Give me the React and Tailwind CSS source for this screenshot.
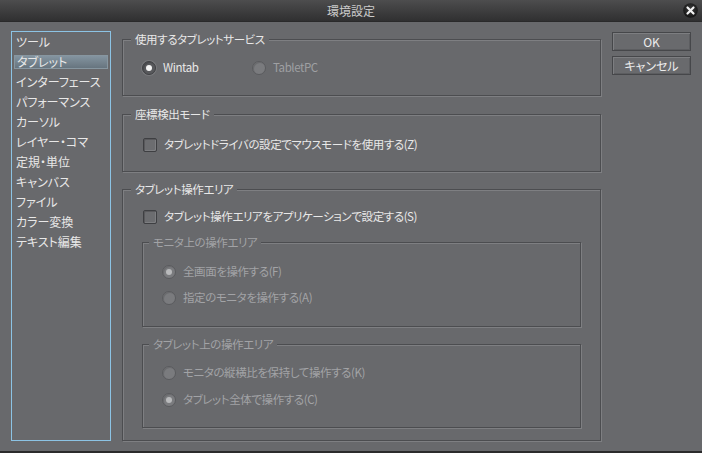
import React from "react";

const FONT = "font-['Noto_Sans_CJK_JP','Noto_Sans',sans-serif] [font-feature-settings:'palt']";

function Radio({ checked, disabled }) {
  return (
    <span
      className={
        "relative flex h-[14px] w-[14px] shrink-0 items-center justify-center rounded-full border " +
        (disabled
          ? "border-[#5a5b5e] bg-[#7a7b7e] shadow-[inset_1px_1px_0_#6a6b6e]"
          : "border-[#3f4043] bg-[#58595c] shadow-[inset_1px_1px_0_#48494c,0_0_0_1px_#77787b]")
      }
    >
      {checked && (
        <span
          className={
            "h-[6px] w-[6px] rounded-full " +
            (disabled ? "bg-[#b9babc]" : "bg-[#f4f4f4]")
          }
        />
      )}
    </span>
  );
}

function Checkbox() {
  return (
    <span className="h-[14px] w-[14px] shrink-0 rounded-[2px] border border-[#3e3f42] bg-[#6c6d70] shadow-[inset_1px_1px_0_#59595c,inset_-1px_-1px_0_#7d7e81]" />
  );
}

function Group({ title, className, legendClass, children }) {
  return (
    <fieldset
      className={
        "m-0 min-w-0 border border-[#4c4d50] p-0 shadow-[inset_1px_1px_0_#7e7f82,1px_1px_0_#7e7f82] " +
        className
      }
    >
      <legend
        className={
          "h-[16px] bg-[#68696c] px-[4px] leading-[16px] " +
          legendClass
        }
      >
        {title}
      </legend>
      {children}
    </fieldset>
  );
}

const items = [
  "ツール",
  "タブレット",
  "インターフェース",
  "パフォーマンス",
  "カーソル",
  "レイヤー・コマ",
  "定規・単位",
  "キャンバス",
  "ファイル",
  "カラー変換",
  "テキスト編集",
];

export default function App() {
  return (
    <div className={"flex h-[453px] w-[702px] flex-col overflow-hidden bg-[#68696c] text-[11.5px] tracking-[-0.4px] text-[#e8e8e8] " + FONT}>
      {/* title bar */}
      <div className="relative flex h-[22px] shrink-0 items-center justify-center border-b border-[#2a2a2b] bg-gradient-to-b from-[#4d4d4e] to-[#303031]">
        <span className="text-[12px] leading-[16px] tracking-normal text-[#cacaca]">環境設定</span>
        <div className="absolute right-[4px] top-[3px] h-[15px] w-[15px]">
          <svg width="15" height="15" viewBox="0 0 15 15">
            <defs>
              <radialGradient id="cg" cx="50%" cy="40%" r="60%">
                <stop offset="0%" stopColor="#3a3a3a" />
                <stop offset="100%" stopColor="#141414" />
              </radialGradient>
            </defs>
            <circle cx="7.5" cy="7.5" r="7.3" fill="url(#cg)" />
            <path d="M4.5 4.5 L10.5 10.5 M10.5 4.5 L4.5 10.5" stroke="#f2f2f2" strokeWidth="2.2" strokeLinecap="round" />
          </svg>
        </div>
      </div>

      {/* body */}
      <div className="flex flex-1 pl-[11px] pt-[9px]">
        {/* sidebar */}
        <div className="flex h-[410px] w-[100px] shrink-0 flex-col border border-[#8cc3e4] text-[12px] tracking-normal">
          {items.map((t, i) => (
            <div key={t} className="h-[20px] px-[2px] py-[3px]">
              <div
                className={
                  "flex h-[14px] items-center whitespace-nowrap pl-[2px] leading-[14px] " +
                  (i === 1
                    ? "border border-[#8796a0] bg-gradient-to-b from-[#8494a0] to-[#67757f] pl-[1px]"
                    : "")
                }
              >
                {t}
              </div>
            </div>
          ))}
        </div>

        {/* main column */}
        <div className="ml-[11px] flex w-[479px] shrink-0 flex-col">
          <Group title="使用するタブレットサービス" className="h-[65px]" legendClass="ml-[8px]">
            <div className="mt-[13px] flex h-[16px] items-center pl-[19px]">
              <div className="flex w-[110px] items-center gap-[7px]">
                <Radio checked />
                <span>Wintab</span>
              </div>
              <div className="flex items-center gap-[7px] text-[#9fa0a3]">
                <Radio disabled />
                <span>TabletPC</span>
              </div>
            </div>
          </Group>

          <Group title="座標検出モード" className="mt-[10px] h-[66px]" legendClass="ml-[8px]">
            <div className="mt-[15px] flex h-[16px] items-center gap-[7px] pl-[20px]">
              <Checkbox />
              <span>タブレットドライバの設定でマウスモードを使用する(Z)</span>
            </div>
          </Group>

          <Group title="タブレット操作エリア" className="mt-[9px] h-[260px]" legendClass="ml-[8px]">
            <div className="mt-[12px] flex h-[16px] items-center gap-[7px] pl-[20px]">
              <Checkbox />
              <span>タブレット操作エリアをアプリケーションで設定する(S)</span>
            </div>

            <Group
              title="モニタ上の操作エリア"
              className="ml-[19px] mt-[9px] h-[93px] w-[439px] text-[#a2a3a6]"
              legendClass="ml-[6px]"
            >
              <div className="mt-[14px] flex h-[16px] items-center gap-[7px] pl-[19px]">
                <Radio checked disabled />
                <span>全画面を操作する(F)</span>
              </div>
              <div className="mt-[10px] flex h-[16px] items-center gap-[7px] pl-[19px]">
                <Radio disabled />
                <span>指定のモニタを操作する(A)</span>
              </div>
            </Group>

            <Group
              title="タブレット上の操作エリア"
              className="ml-[19px] mt-[9px] h-[92px] w-[439px] text-[#a2a3a6]"
              legendClass="ml-[6px]"
            >
              <div className="mt-[13px] flex h-[16px] items-center gap-[7px] pl-[19px]">
                <Radio disabled />
                <span>モニタの縦横比を保持して操作する(K)</span>
              </div>
              <div className="mt-[11px] flex h-[16px] items-center gap-[7px] pl-[19px]">
                <Radio checked disabled />
                <span>タブレット全体で操作する(C)</span>
              </div>
            </Group>
          </Group>
        </div>

        {/* buttons */}
        <div className="ml-[11px] flex flex-col gap-[5px] pt-[1px]">
          <button className="flex h-[19px] w-[79px] items-center justify-center border border-[#46474a] bg-[#696a6d] text-[12px] leading-[14px] tracking-normal text-[#ececec] shadow-[inset_1px_1px_0_#7d7e81,inset_-1px_-1px_0_#5c5d60]">
            OK
          </button>
          <button className="flex h-[19px] w-[79px] items-center justify-center border border-[#46474a] bg-[#696a6d] text-[12px] leading-[14px] tracking-normal text-[#ececec] shadow-[inset_1px_1px_0_#7d7e81,inset_-1px_-1px_0_#5c5d60]">
            キャンセル
          </button>
        </div>
      </div>
      <div className="h-[2px] shrink-0 bg-[#2b2b2c]" />
    </div>
  );
}
